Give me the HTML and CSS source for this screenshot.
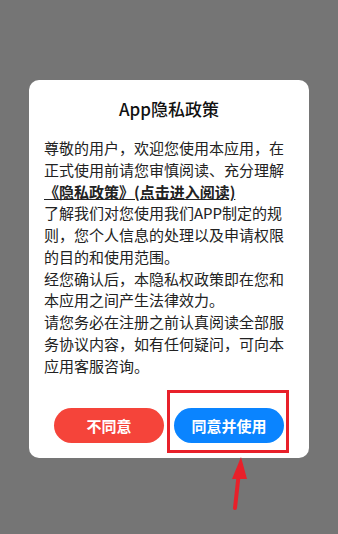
FILE: index.html
```html
<!DOCTYPE html>
<html lang="zh">
<head>
<meta charset="utf-8">
<link rel="stylesheet" href="styles.css">
</head>
<body>
<div class="screen">
  <div class="dialog">
    <h1 class="title">App隐私政策</h1>
    <div class="content">
      <p>尊敬的用户，欢迎您使用本应用，在正式使用前请您审慎阅读、充分理解</p>
      <p class="link">《隐私政策》(点击进入阅读)</p>
      <p>了解我们对您使用我们APP制定的规则，您个人信息的处理以及申请权限的目的和使用范围。</p>
      <p>经您确认后，本隐私权政策即在您和本应用之间产生法律效力。</p>
      <p>请您务必在注册之前认真阅读全部服务协议内容，如有任何疑问，可向本应用客服咨询。</p>
    </div>
    <div class="actions">
      <button class="btn btn-reject">不同意</button>
      <button class="btn btn-accept">同意并使用</button>
    </div>
  </div>
  <div class="highlight"></div>
  <svg class="arrow" width="30" height="60" viewBox="0 0 30 60">
    <line x1="11" y1="56" x2="15" y2="20" stroke="#e8202a" stroke-width="4" stroke-linecap="round"/>
    <polygon points="17,5 8,27 23,27" fill="#e8202a"/>
  </svg>
</div>
</body>
</html>
```
FILE: styles.css
```css
html, body {
  margin: 0;
  padding: 0;
  background: #757575;
}
.screen {
  position: relative;
  width: 338px;
  height: 534px;
  padding-top: 80px;
  box-sizing: border-box;
  font-family: "Noto Sans CJK SC", "Noto Sans", sans-serif;
}
.dialog {
  margin-left: 29px;
  width: 280px;
  background: #fff;
  border-radius: 10px;
  padding: 17px 0 15px;
  box-sizing: border-box;
}
.title {
  margin: 0;
  text-align: center;
  font-size: 17px;
  line-height: 24px;
  font-weight: 500;
  color: #111;
}
.content {
  margin-top: 16px;
  padding: 0 15px;
  font-size: 15px;
  line-height: 21.75px;
  color: #222;
}
.content p {
  margin: 0;
}
.content .link {
  font-weight: 700;
  text-decoration: underline;
  color: #222;
}
.actions {
  margin-top: 32px;
  display: flex;
  justify-content: center;
  gap: 10px;
}
.btn {
  width: 110px;
  height: 35px;
  border: none;
  border-radius: 18px;
  color: #fff;
  font-family: inherit;
  font-size: 15px;
  font-weight: 700;
  padding: 0;
}
.btn-reject {
  background: #f5443a;
}
.btn-accept {
  background: #0a84ff;
}
.highlight {
  position: absolute;
  left: 167px;
  top: 390px;
  width: 122px;
  height: 63px;
  box-sizing: border-box;
  border: 3.5px solid #e8202a;
}
.arrow {
  position: absolute;
  left: 224px;
  top: 452px;
}
```
